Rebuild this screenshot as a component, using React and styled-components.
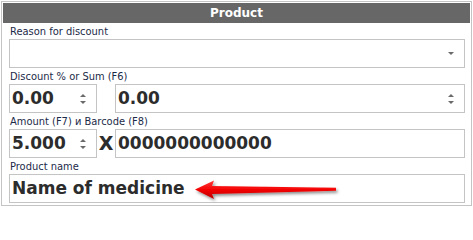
import styled, { createGlobalStyle } from 'styled-components';

const GlobalStyle = createGlobalStyle`
  html, body {
    margin: 0;
    padding: 0;
    background: #fff;
  }
  * {
    box-sizing: border-box;
  }
`;

const Frame = styled.div`
  margin: 1px 0 0 1px;
  width: 471px;
  height: 205px;
  border: 1px solid #c4c4c4;
  padding: 1px;
  background: #fff;
  font-family: "DejaVu Sans Condensed", "DejaVu Sans", sans-serif;
`;

const Header = styled.div`
  height: 20px;
  background: #676767;
  color: #fff;
  font-family: "DejaVu Sans", sans-serif;
  font-weight: bold;
  font-size: 12px;
  line-height: 20px;
  text-align: center;
`;

const Body = styled.div`
  padding: 0 5px 0 6px;
`;

const Label = styled.div`
  height: 16px;
  padding: 2px 0 0 1px;
  font-size: 11px;
  line-height: 13px;
  color: #1c2a48;
  white-space: nowrap;
`;

const Row = styled.div`
  display: flex;
  align-items: stretch;
  height: 29px;
`;

const Box = styled.div`
  position: relative;
  display: flex;
  align-items: center;
  flex: ${p => (p.$grow ? '1 1 auto' : `0 0 ${p.$width}px`)};
  height: 29px;
  border: 1px solid #c4c4c4;
  padding: 0 0 2px 2px;
  font-family: "DejaVu Sans", sans-serif;
  font-weight: bold;
  font-size: 17px;
  color: #2c2c2c;
  white-space: nowrap;
`;

const Gap = styled.div`
  flex: 0 0 18px;
  display: flex;
  align-items: center;
  justify-content: center;
  padding-bottom: 2px;
  font-family: "DejaVu Sans", sans-serif;
  font-weight: bold;
  font-size: 19px;
  color: #2c2c2c;
`;

const Arrows = styled.div`
  position: absolute;
  right: ${p => p.$right}px;
  top: 0;
  bottom: 0;
  display: flex;
  flex-direction: column;
  justify-content: center;
  gap: 4px;
`;

const Tri = styled.div`
  width: 0;
  height: 0;
  border-left: 3px solid transparent;
  border-right: 3px solid transparent;
  ${p =>
    p.$up
      ? 'border-bottom: 3px solid #6a6a6a;'
      : 'border-top: 3px solid #6a6a6a;'}
`;

const Pointer = styled.svg`
  position: absolute;
  left: 174px;
  top: 0px;
  overflow: visible;
`;

function Spinner({ right }) {
  return (
    <Arrows $right={right}>
      <Tri $up />
      <Tri />
    </Arrows>
  );
}

function RedArrow() {
  return (
    <Pointer width="160" height="28" viewBox="0 0 160 28">
      <defs>
        <linearGradient id="redFill" x1="0" y1="0" x2="0" y2="1">
          <stop offset="0" stopColor="#ff3a3a" />
          <stop offset="0.5" stopColor="#f40000" />
          <stop offset="1" stopColor="#b80000" />
        </linearGradient>
        <filter id="shade" x="-10%" y="-40%" width="130%" height="200%">
          <feDropShadow dx="1.5" dy="2" stdDeviation="1.5" floodColor="#000" floodOpacity="0.45" />
        </filter>
      </defs>
      <path
        d="M11 14.5 L30 5.5 L28 11 L152 12.8 L152 15.8 L28 19 L30 24 Z"
        fill="url(#redFill)"
        filter="url(#shade)"
      />
    </Pointer>
  );
}

export default function App() {
  return (
    <>
      <GlobalStyle />
      <Frame>
        <Header>Product</Header>
        <Body>
          <Label>Reason for discount</Label>
          <Row>
            <Box $grow>
              <Arrows $right={10}>
                <Tri />
              </Arrows>
            </Box>
          </Row>

          <Label>Discount % or Sum (F6)</Label>
          <Row>
            <Box $width={88}>
              0.00
              <Spinner right={10} />
            </Box>
            <Gap />
            <Box $grow>
              0.00
              <Spinner right={10} />
            </Box>
          </Row>

          <Label>Amount (F7) и Barcode (F8)</Label>
          <Row>
            <Box $width={88}>
              5.000
              <Spinner right={10} />
            </Box>
            <Gap>X</Gap>
            <Box $grow>0000000000000</Box>
          </Row>

          <Label>Product name</Label>
          <Row>
            <Box $grow>
              Name of medicine
              <RedArrow />
            </Box>
          </Row>
        </Body>
      </Frame>
    </>
  );
}
